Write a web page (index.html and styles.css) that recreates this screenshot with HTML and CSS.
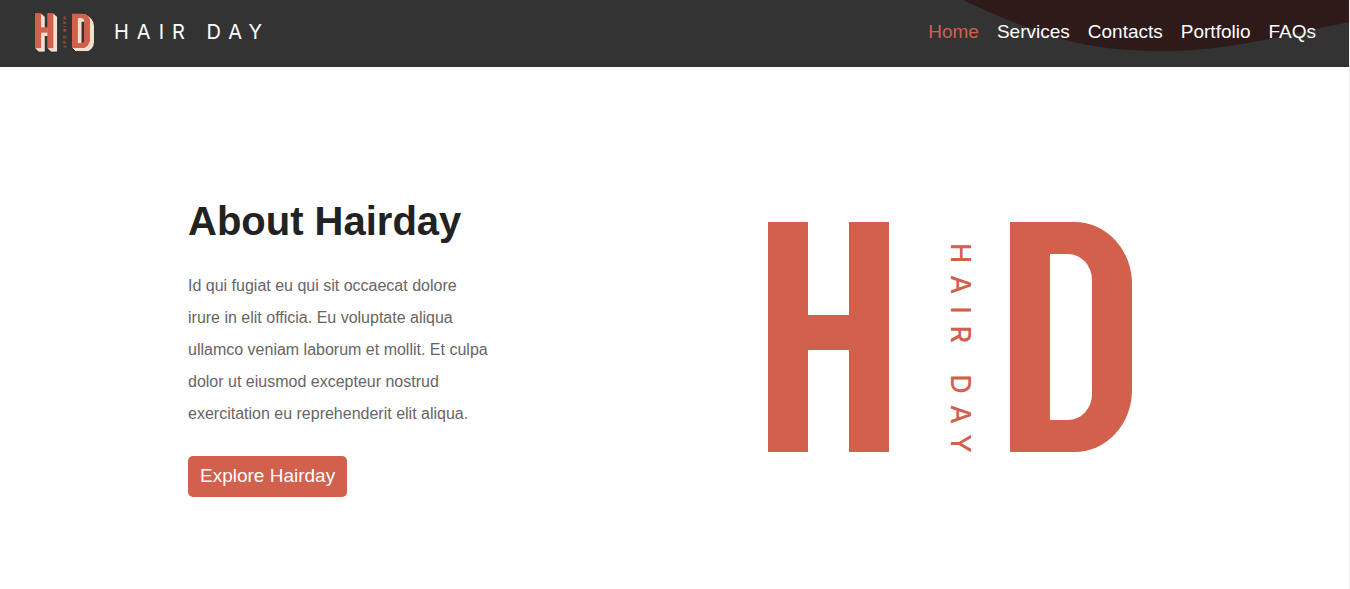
FILE: index.html
```html
<!DOCTYPE html>
<html lang="en">
<head>
<meta charset="utf-8">
<meta name="viewport" content="width=device-width, initial-scale=1">
<title>Hair Day</title>
<link rel="stylesheet" href="styles.css">
</head>
<body>
<svg class="sprite" aria-hidden="true">
  <defs>
    <mask id="counter" maskUnits="userSpaceOnUse" x="242" y="0" width="122" height="230">
      <rect x="242" width="122" height="230" fill="#fff"/>
      <svg x="282" y="32" width="42" height="166"><rect x="-42" width="84" height="166" rx="24" ry="26" fill="#000"/></svg>
    </mask>
    <g id="mark" fill="currentColor">
      <rect width="40" height="230"/>
      <rect x="81" width="40" height="230"/>
      <rect x="39" y="93" width="43" height="35"/>
      <g mask="url(#counter)">
        <svg x="242" width="122" height="230"><rect x="-122" width="244" height="230" rx="57" ry="62"/></svg>
      </g>
    </g>
    <text id="mark-name" class="mark-name" transform="translate(183 21) rotate(90)">HAIR DAY</text>
  </defs>
</svg>

<header class="header">
  <svg class="header-wave" viewBox="0 0 386 67" aria-hidden="true">
    <path d="M0 0C36 17 70 31 103 40C145 52 215 55 272 45C315 38 350 29 386 22V0Z"/>
  </svg>
  <a class="brand" href="#">
    <svg class="brand-mark" viewBox="0 0 388 254" role="img" aria-label="HD">
      <g class="brand-shade">
        <use href="#mark" x="4" y="4"/><use href="#mark" x="8" y="8"/><use href="#mark" x="12" y="12"/>
        <use href="#mark" x="16" y="16"/><use href="#mark" x="20" y="20"/><use href="#mark" x="24" y="22"/>
      </g>
      <use href="#mark"/>
      <use href="#mark-name"/>
    </svg>
    <span class="brand-name">HAIR DAY</span>
  </a>
  <nav class="nav">
    <a class="nav-link active" href="#" aria-current="page">Home</a>
    <a class="nav-link" href="#">Services</a>
    <a class="nav-link" href="#">Contacts</a>
    <a class="nav-link" href="#">Portfolio</a>
    <a class="nav-link" href="#">FAQs</a>
  </nav>
</header>

<main class="about">
  <section class="about-text">
    <h1 class="about-title">About Hairday</h1>
    <p class="about-copy">Id qui fugiat eu qui sit occaecat dolore irure in elit officia. Eu voluptate aliqua ullamco veniam laborum et mollit. Et culpa dolor ut eiusmod excepteur nostrud exercitation eu reprehenderit elit aliqua.</p>
    <button class="button" type="button">Explore Hairday</button>
  </section>
  <svg class="about-logo" viewBox="0 0 364 230" role="img" aria-label="HD Hair Day">
    <use href="#mark"/>
    <use href="#mark-name"/>
  </svg>
</main>
</body>
</html>
```
FILE: styles.css
```css
* {
  box-sizing: border-box;
}

body {
  margin: 0;
  min-height: 100vh;
  border-right: 1px solid #f0f0f0;
  background: #fff;
  font-family: "Liberation Sans", Arial, sans-serif;
}

.sprite {
  position: absolute;
  width: 0;
  height: 0;
}

.mark-name {
  fill: currentColor;
  font-family: Inter, sans-serif;
  font-size: 27px;
  font-weight: 500;
  letter-spacing: 12px;
}

.header {
  position: relative;
  display: flex;
  justify-content: space-between;
  align-items: center;
  min-height: 67px;
  padding: 0 33px 3px 35px;
  background: #333;
}

.header-wave {
  position: absolute;
  top: 0;
  right: 0;
  height: 67px;
  fill: #2d1a19;
}

.brand {
  display: flex;
  align-items: center;
  gap: 20px;
  color: #d1604c;
  text-decoration: none;
}

.brand-mark {
  width: 59px;
  height: 39px;
}

.brand-shade {
  color: #f5dfcf;
}

.brand-name {
  color: #fff;
  font-family: Inter, sans-serif;
  font-size: 20px;
  font-weight: 400;
  letter-spacing: 8px;
}

.nav {
  position: relative;
  display: flex;
  gap: 18px;
}

.nav-link {
  color: #fff;
  font-size: 19px;
  line-height: 24px;
  text-decoration: none;
}

.nav-link.active {
  color: #d1604c;
}

.about {
  display: grid;
  grid-template-columns: 1fr 1fr;
  gap: 128px;
  align-items: center;
  max-width: 1013px;
  margin: 0 auto;
  padding: 110px 20px 90px;
}

.about-text {
  padding-top: 20px;
}

.about-title {
  margin: 0 0 25px;
  color: #222;
  font-size: 40px;
  line-height: 48px;
}

.about-copy {
  max-width: 304px;
  margin: 0 0 26px;
  color: #666;
  font-size: 16px;
  line-height: 32px;
}

.button {
  padding: 8px 12px 9px;
  border: 0;
  border-radius: 5px;
  background: #d1604c;
  color: #fff;
  font-family: inherit;
  font-size: 19px;
  line-height: 24px;
}

.about-logo {
  justify-self: center;
  width: 100%;
  max-width: 364px;
  color: #d1604c;
}
```
